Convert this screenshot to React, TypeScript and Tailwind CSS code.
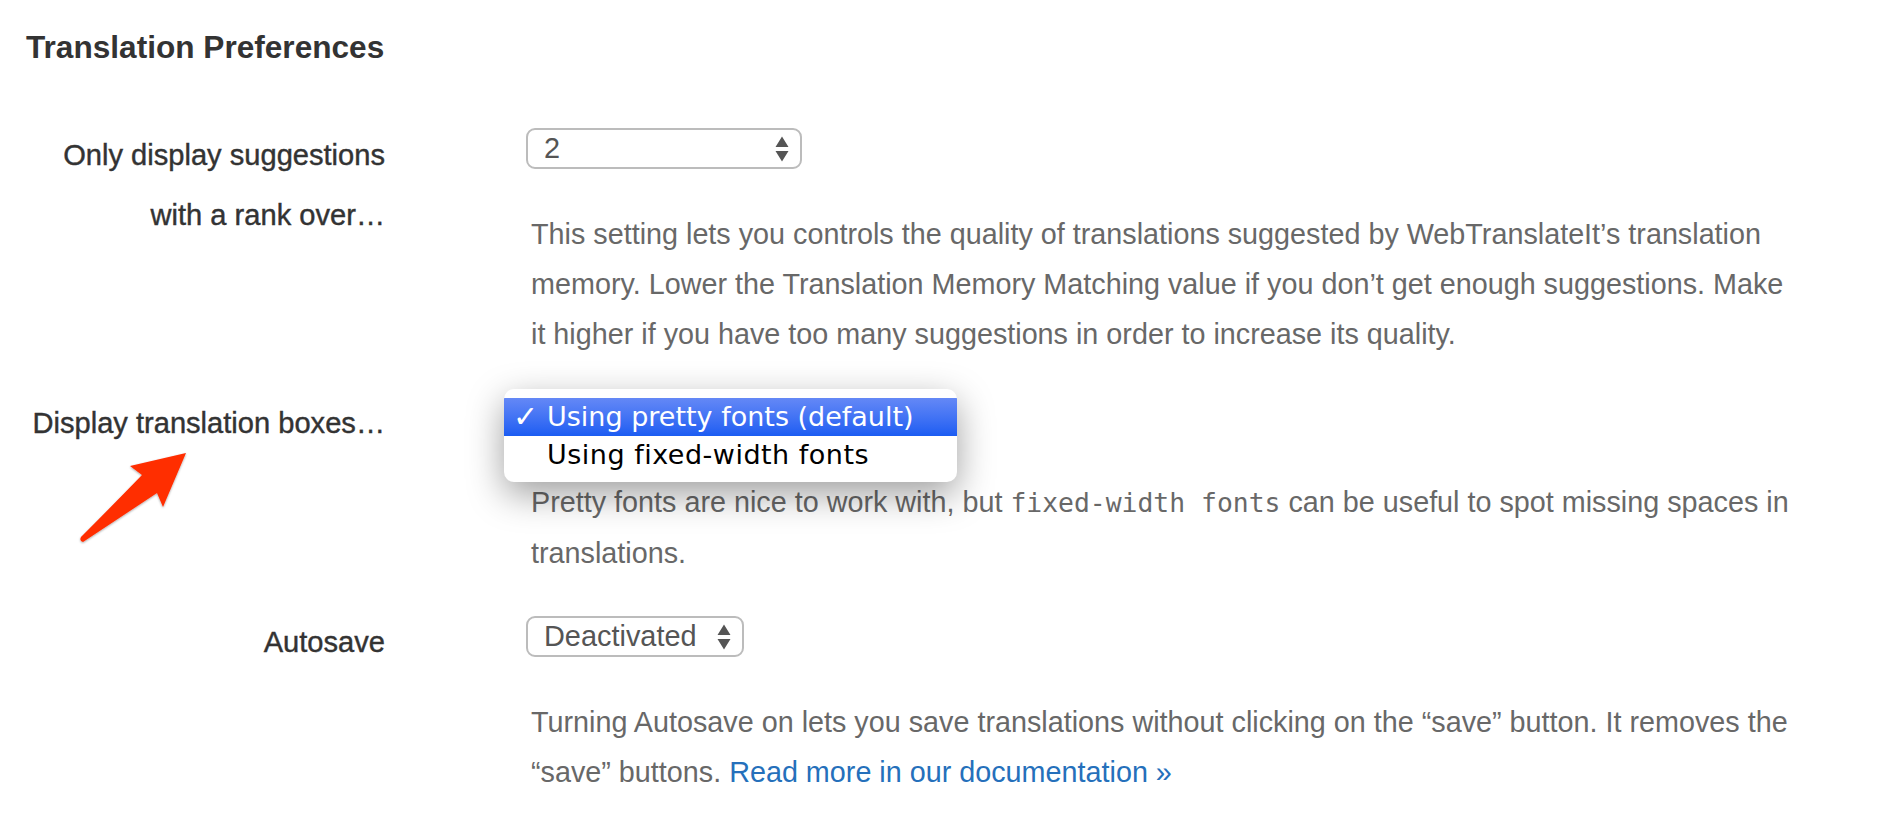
import React from "react";

const Arrows = () => (
  <svg width="14" height="26" viewBox="0 0 14 26" className="block">
    <path d="M7 0.5 L13.5 11 H0.5 Z M0.5 15 H13.5 L7 25.5 Z" fill="#555" />
  </svg>
);

const Select = ({ value, className }: { value: string; className: string }) => (
  <div className={`flex h-[41px] items-center justify-between rounded-[9px] border-2 border-[#bcbcbc] bg-white pl-[16px] pr-[11px] text-[28.9px] text-[#555] ${className}`}>
    <span>{value}</span>
    <Arrows />
  </div>
);

const Label = ({ children }: { children: React.ReactNode }) => (
  <div className="text-right text-[29.1px] leading-[60px] font-normal text-[#333] [-webkit-text-stroke:0.4px_#333]">{children}</div>
);

const Help = ({ children }: { children: React.ReactNode }) => (
  <p className="ml-[5px] mt-[40px] w-[1270px] text-[28.75px] leading-[50px] text-[#686868]">{children}</p>
);

export default function App() {
  return (
    <div className="relative h-[832px] w-[1880px] overflow-hidden bg-white font-['Liberation_Sans',Arial,sans-serif]">
      <h2 className="pl-[26px] pt-[27px] text-[31.6px] leading-[40px] font-bold text-[#333]">Translation Preferences</h2>

      <div className="mt-[61px] grid grid-cols-[385px_1fr] gap-x-[141px]">
        <div className="-mt-[3px]">
          <Label>Only display suggestions<br />with a rank over…</Label>
        </div>
        <div>
          <Select value="2" className="w-[276px]" />
          <Help>
            This setting lets you controls the quality of translations suggested by WebTranslateIt’s translation memory. Lower the Translation Memory Matching value if you don’t get enough suggestions. Make it higher if you have too many suggestions in order to increase its quality.
          </Help>
        </div>

        <div className="mt-[34px]">
          <Label>Display translation boxes…</Label>
        </div>
        <div className="mt-[37px]">
          <div className="relative h-[41px]">
            <div className="absolute left-[-22px] top-[-7px] z-10 h-[93px] w-[453px] overflow-hidden rounded-[10px] bg-white pt-[9px] font-['DejaVu_Sans',sans-serif] text-[27px] shadow-[0_12px_36px_rgba(0,0,0,0.38)]">
              <div className="flex h-[38px] items-center bg-gradient-to-b from-[#6488f6] to-[#1b5cf2] text-white">
                <span className="w-[43px] pl-[9px] text-[30px] leading-none font-bold">✓</span>
                <span>Using pretty fonts (default)</span>
              </div>
              <div className="flex h-[38px] items-center text-black">
                <span className="w-[43px]"></span>
                <span className="tracking-[0.5px]">Using fixed-width fonts</span>
              </div>
            </div>
          </div>
          <Help>
            Pretty fonts are nice to work with, but <code className="font-['DejaVu_Sans_Mono',monospace] text-[26.4px]">fixed-width fonts</code> can be useful to spot missing spaces in translations.
          </Help>
        </div>

        <div className="mt-[34px]">
          <Label>Autosave</Label>
        </div>
        <div className="mt-[38px]">
          <Select value="Deactivated" className="w-[218px]" />
          <Help>
            Turning Autosave on lets you save translations without clicking on the “save” button. It removes the “save” buttons. <a className="text-[#2570bb]">Read more in our documentation »</a>
          </Help>
        </div>
      </div>

      <svg className="absolute left-[70px] top-[445px]" width="130" height="110" viewBox="70 445 130 110">
        <defs>
          <filter id="s" x="-20%" y="-20%" width="140%" height="140%">
            <feDropShadow dx="0" dy="1" stdDeviation="1" floodColor="#000" floodOpacity="0.35" />
          </filter>
        </defs>
        <path d="M186 453 L130 466 L142 475 Q110 508 81 537 Q79 541 83 542 L157 493 L163 507 Z" fill="#ff2d00" filter="url(#s)" />
      </svg>
    </div>
  );
}
